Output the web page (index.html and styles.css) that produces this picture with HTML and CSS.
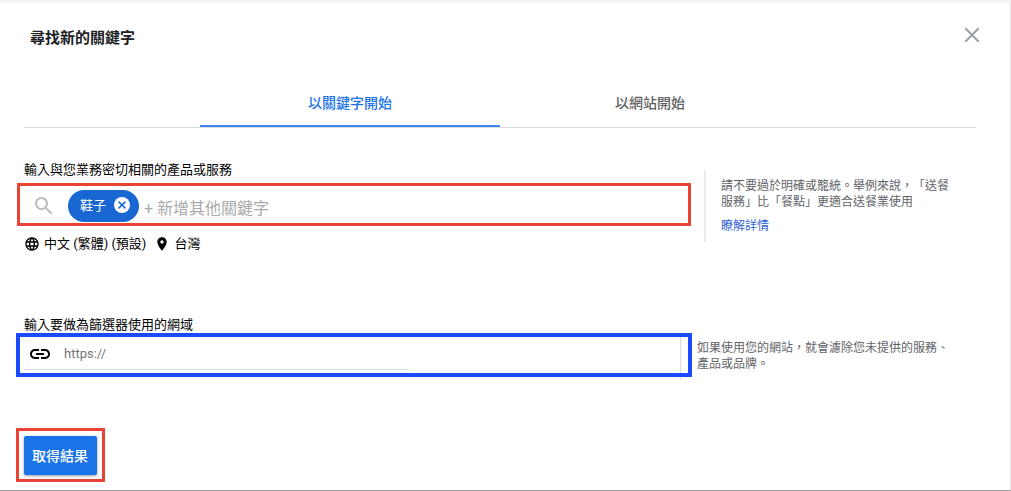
FILE: index.html
```html
<!DOCTYPE html>
<html lang="zh-Hant">

<head>
  <meta charset="UTF-8">
  <meta name="viewport" content="width=device-width, initial-scale=1">
  <title>尋找新的關鍵字</title>
  <link rel="stylesheet" href="styles.css">
</head>

<body>
  <main class="card">
    <header class="card-header">
      <h1 class="card-title">尋找新的關鍵字</h1>
      <button class="icon-button" type="button" aria-label="關閉">
        <svg class="icon icon-close" viewBox="0 0 24 24"><path d="M5.3 5.3 18.7 18.7M18.7 5.3 5.3 18.7"></path></svg>
      </button>
    </header>

    <div class="tabs" role="tablist">
      <button class="tab tab-active" type="button" role="tab" aria-selected="true">以關鍵字開始</button>
      <button class="tab" type="button" role="tab" aria-selected="false">以網站開始</button>
    </div>

    <form class="form">
      <section class="row row-keywords">
        <div class="column">
          <label class="label" for="keywords">輸入與您業務密切相關的產品或服務</label>
          <div class="keyword-field">
            <svg class="icon icon-search" viewBox="0 0 24 24"><path d="M15.5 14h-.79l-.28-.27C15.41 12.59 16 11.11 16 9.5 16 5.91 13.09 3 9.5 3S3 5.91 3 9.5 5.91 16 9.5 16c1.61 0 3.09-.59 4.23-1.57l.27.28v.79l5 4.99L20.49 19l-4.99-5zm-6 0C7.01 14 5 11.99 5 9.5S7.01 5 9.5 5 14 7.01 14 9.5 11.99 14 9.5 14z"></path></svg>
            <span class="chip">
              鞋子
              <button class="chip-remove" type="button" aria-label="移除">
                <svg class="icon icon-cancel" viewBox="0 0 20 20"><circle cx="10" cy="9" r="8"></circle><path class="icon-cross" d="M6.6 5.6 13.4 12.4M13.4 5.6 6.6 12.4"></path></svg>
              </button>
            </span>
            <input class="keyword-input" id="keywords" type="text" placeholder="+ 新增其他關鍵字">
            <span class="frame frame-keywords"></span>
          </div>
          <div class="targeting">
            <span class="target">
              <svg class="icon icon-small" viewBox="0 0 24 24"><path d="M11.99 2C6.47 2 2 6.48 2 12s4.47 10 9.99 10C17.52 22 22 17.52 22 12S17.52 2 11.99 2zm6.93 6h-2.95c-.32-1.25-.78-2.45-1.38-3.56 1.84.63 3.37 1.91 4.33 3.56zM12 4.04c.83 1.2 1.48 2.53 1.91 3.96h-3.82c.43-1.43 1.08-2.76 1.91-3.96zM4.26 14C4.1 13.36 4 12.69 4 12s.1-1.36.26-2h3.38c-.08.66-.14 1.32-.14 2s.06 1.34.14 2H4.26zm.82 2h2.95c.32 1.25.78 2.45 1.38 3.56-1.84-.63-3.37-1.9-4.33-3.56zm2.95-8H5.08c.96-1.66 2.49-2.93 4.33-3.56C8.81 5.55 8.35 6.75 8.03 8zM12 19.96c-.83-1.2-1.48-2.53-1.91-3.96h3.82c-.43 1.43-1.08 2.76-1.91 3.96zM14.34 14H9.66c-.09-.66-.16-1.32-.16-2s.07-1.35.16-2h4.68c.09.65.16 1.32.16 2s-.07 1.34-.16 2zm.25 5.56c.6-1.11 1.06-2.31 1.38-3.56h2.95c-.96 1.65-2.49 2.93-4.33 3.56zM16.36 14c.08-.66.14-1.32.14-2s-.06-1.34-.14-2h3.38c.16.64.26 1.31.26 2s-.1 1.36-.26 2h-3.38z"></path></svg>
              中文 (繁體) (預設)
            </span>
            <span class="target">
              <svg class="icon icon-small" viewBox="0 0 24 24"><path d="M12 2C8.13 2 5 5.13 5 9c0 5.25 7 13 7 13s7-7.75 7-13c0-3.87-3.13-7-7-7zm0 9.5c-1.38 0-2.5-1.12-2.5-2.5s1.12-2.5 2.5-2.5 2.5 1.12 2.5 2.5-1.12 2.5-2.5 2.5z"></path></svg>
              台灣
            </span>
          </div>
        </div>
        <aside class="hint hint-keywords">
          <p class="hint-text">請不要過於明確或籠統。舉例來說，「送餐服務」比「餐點」更適合送餐業使用</p>
          <a class="hint-link" href="#">瞭解詳情</a>
        </aside>
      </section>

      <section class="row row-domain">
        <div class="column">
          <label class="label" for="domain">輸入要做為篩選器使用的網域</label>
          <div class="domain-field">
            <div class="domain-box">
              <svg class="icon icon-link" viewBox="0 0 24 24"><path d="M3.9 12c0-1.71 1.39-3.1 3.1-3.1h4V7H7c-2.76 0-5 2.24-5 5s2.24 5 5 5h4v-1.9H7c-1.71 0-3.1-1.39-3.1-3.1zM8 13h8v-2H8v2zm9-6h-4v1.9h4c1.71 0 3.1 1.39 3.1 3.1s-1.39 3.1-3.1 3.1h-4V17h4c2.76 0 5-2.24 5-5s-2.24-5-5-5z"></path></svg>
              <input class="domain-input" id="domain" type="text" placeholder="https://">
            </div>
            <span class="frame frame-domain"></span>
          </div>
        </div>
        <aside class="hint hint-domain">
          <p class="hint-text">如果使用您的網站，就會濾除您未提供的服務、產品或品牌。</p>
        </aside>
      </section>

      <div class="actions">
        <button class="submit" type="button">取得結果</button>
        <span class="frame frame-submit"></span>
      </div>
    </form>
  </main>
</body>

</html>
```

FILE: styles.css
```css
* {
  box-sizing: border-box;
}

body {
  background-color: #f1f3f4;
  color: #202124;
  font-family: Roboto, "Noto Sans CJK TC", sans-serif;
  font-size: 13px;
  line-height: 20px;
  margin: 0;
  padding-top: 3px;
  text-spacing-trim: space-all;
}

button,
input {
  background: none;
  border: 0;
  color: inherit;
  font: inherit;
  margin: 0;
  outline: 0;
  padding: 0;
}

button {
  cursor: pointer;
}

.card {
  background-color: #fff;
  border-bottom: 1px solid #9e9e9e;
  border-right: 1px solid #e4e6e8;
  min-height: calc(100vh - 3px);
  padding: 20px 34px 14px 24px;
}

.card-header {
  align-items: flex-start;
  display: flex;
  height: 28px;
  justify-content: space-between;
  margin-right: -8px;
  padding-left: 6px;
}

.card-title {
  font-size: 15px;
  font-weight: 700;
  line-height: 30px;
  margin: 0;
}

.icon {
  display: block;
  fill: currentColor;
  flex: none;
  height: 24px;
  width: 24px;
}

.icon-close {
  color: #9aa0a6;
  fill: none;
  stroke: currentColor;
  stroke-width: 2;
}

.tabs {
  border-bottom: 1px solid #dadce0;
  display: flex;
  justify-content: center;
  margin-top: 28px;
}

.tab {
  border-bottom: 2px solid transparent;
  color: #616161;
  font-size: 14px;
  font-weight: 500;
  height: 48px;
  padding-top: 2px;
  width: 300px;
}

.tab-active {
  border-color: #4285f4;
  color: #1a73e8;
}

.row {
  display: flex;
}

.row-keywords {
  margin-top: 32px;
}

.row-domain {
  margin-top: 61px;
}

.column {
  flex: 1;
  min-width: 0;
}

.label {
  color: #000;
  display: block;
}

.keyword-field {
  align-items: center;
  display: flex;
  margin: 10px 20px 0 0;
  padding-left: 8px;
  position: relative;
}

.icon-search {
  color: #bdbdbd;
}

.chip {
  align-items: center;
  background-color: #1967d2;
  border-radius: 16px;
  color: #fff;
  display: flex;
  gap: 6px;
  height: 32px;
  margin-left: 12px;
  padding: 0 7px 0 12px;
}

.icon-cancel {
  height: 20px;
  width: 20px;
}

.icon-cross {
  fill: none;
  stroke: #1967d2;
  stroke-width: 1.5;
}

.keyword-input {
  flex: 1;
  font-size: 16px;
  height: 32px;
  margin-left: 5px;
  min-width: 0;
  padding-top: 4px;
}

.keyword-input::placeholder {
  color: #aaa;
}

.targeting {
  color: #000;
  display: flex;
  gap: 8px;
  margin-top: 12px;
}

.target {
  align-items: center;
  display: flex;
  gap: 4px;
}

.icon-small {
  height: 16px;
  width: 16px;
}

.hint {
  color: #5f6368;
  font-size: 12px;
  line-height: 16px;
}

.hint-text {
  margin: 0;
}

.hint-keywords {
  border-left: 2px solid #e8eaed;
  height: 72px;
  margin-top: 10px;
  padding: 8px 20px 0 15px;
  width: 272px;
}

.hint-domain {
  border-left: 1px solid #dadce0;
  height: 47px;
  margin-top: 18px;
  padding: 7px 24px 0 16px;
  width: 296px;
}

.hint-link {
  color: #3367d6;
  display: inline-block;
  margin-top: 8px;
  text-decoration: none;
}

.domain-field {
  margin-top: 5px;
  position: relative;
}

.domain-box {
  align-items: center;
  border-bottom: 1px solid #dadce0;
  display: flex;
  gap: 12px;
  height: 30px;
  max-width: 384px;
  padding: 0 0 2px 4px;
}

.icon-link {
  color: #000;
}

.domain-input {
  flex: 1;
  min-width: 0;
}

.domain-input::placeholder {
  color: #757575;
}

.actions {
  display: inline-block;
  margin-top: 56px;
  position: relative;
  vertical-align: top;
}

.submit {
  background-color: #1a73e8;
  border-radius: 2px;
  box-shadow: 0 1px 3px rgba(0, 0, 0, 0.4);
  color: #fff;
  display: block;
  font-size: 14px;
  font-weight: 500;
  height: 39px;
  padding: 0 9px 0 8px;
}

/* highlight frames drawn over the form */
.frame {
  border: 3px solid #ea4335;
  pointer-events: none;
  position: absolute;
}

.frame-keywords {
  inset: -7px -7px -4px;
}

.frame-domain {
  border: 4px solid #1a4bff;
  inset: -7px -12px -7px -8px;
}

.frame-submit {
  inset: -8px -8px -7px;
}
```
